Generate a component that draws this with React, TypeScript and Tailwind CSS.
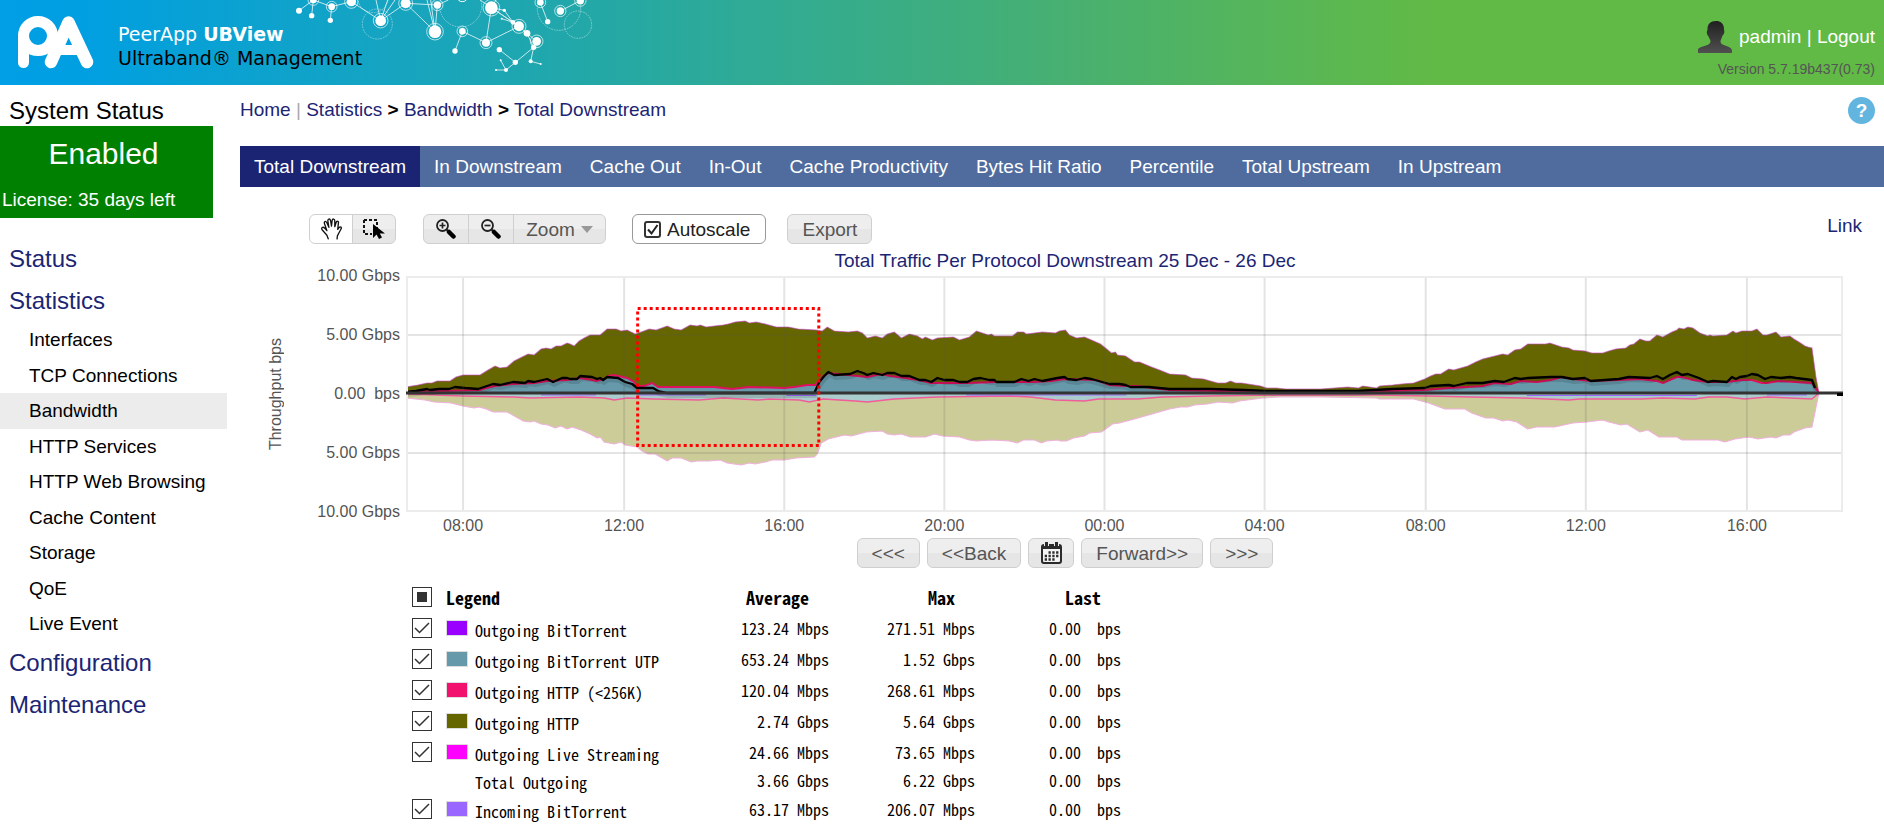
import React, { useState } from 'react';
import clsx from 'clsx';

// ---------------------------------------------------------------------------
// Data
// ---------------------------------------------------------------------------

const TABS = [
  'Total Downstream',
  'In Downstream',
  'Cache Out',
  'In-Out',
  'Cache Productivity',
  'Bytes Hit Ratio',
  'Percentile',
  'Total Upstream',
  'In Upstream',
];

const STATISTICS_ITEMS = [
  'Interfaces',
  'TCP Connections',
  'Bandwidth',
  'HTTP Services',
  'HTTP Web Browsing',
  'Cache Content',
  'Storage',
  'QoE',
  'Live Event',
];

interface LegendRow {
  name: string;
  color?: string;
  average: string;
  max: string;
  last: string;
}

const LEGEND_ROWS: LegendRow[] = [
  { name: 'Outgoing BitTorrent', color: '#9900ff', average: '123.24 Mbps', max: '271.51 Mbps', last: '0.00  bps' },
  { name: 'Outgoing BitTorrent UTP', color: '#6699aa', average: '653.24 Mbps', max: '1.52 Gbps', last: '0.00  bps' },
  { name: 'Outgoing HTTP (<256K)', color: '#f2116c', average: '120.04 Mbps', max: '268.61 Mbps', last: '0.00  bps' },
  { name: 'Outgoing HTTP', color: '#666600', average: '2.74 Gbps', max: '5.64 Gbps', last: '0.00  bps' },
  { name: 'Outgoing Live Streaming', color: '#ff00ff', average: '24.66 Mbps', max: '73.65 Mbps', last: '0.00  bps' },
  { name: 'Total Outgoing', average: '3.66 Gbps', max: '6.22 Gbps', last: '0.00  bps' },
  { name: 'Incoming BitTorrent', color: '#9966ff', average: '63.17 Mbps', max: '206.07 Mbps', last: '0.00  bps' },
];

// ---------------------------------------------------------------------------
// Chart series, in plot units (1436 x 236, zero line at 117)
// ---------------------------------------------------------------------------

const PLOT_WIDTH = 1436;
const PLOT_HEIGHT = 236;
const ZERO_Y = 117;

const Y_TICKS = ['10.00 Gbps', '5.00 Gbps', '0.00  bps', '5.00 Gbps', '10.00 Gbps'];

const X_TICKS = [
  { x: 57, label: '08:00' },
  { x: 218, label: '12:00' },
  { x: 378, label: '16:00' },
  { x: 538, label: '20:00' },
  { x: 698, label: '00:00' },
  { x: 858, label: '04:00' },
  { x: 1019, label: '08:00' },
  { x: 1179, label: '12:00' },
  { x: 1340, label: '16:00' },
];

const OUTGOING =
  '0,111 12,109 21,107 26,107 31,105 44,105 50,101 57,99 74,99 82,94 89,90 94,92 101,91 108,85 114,82 122,78 128,79 135,73 140,72 145,73 150,70 155,70 161,67 164,68 168,70 173,65 178,62 184,59 194,59 201,53 210,53 215,55 221,54 229,58 235,56 243,53 250,54 261,50 268,53 275,54 284,49 291,50 294,49 300,51 308,50 317,49 322,48 329,46 339,45 343,47 350,46 359,48 370,51 377,51 382,51 392,53 410,54 416,55 421,51 428,55 442,56 451,55 456,57 461,62 469,60 476,62 481,58 488,56 495,62 503,58 511,60 516,63 519,61 526,64 531,62 547,61 553,64 563,61 570,55 582,59 585,58 588,60 606,60 611,56 617,56 620,58 636,56 649,57 653,55 659,54 663,59 670,62 678,61 685,64 694,68 699,72 705,77 709,76 711,79 719,80 728,86 733,86 745,91 753,94 763,98 779,99 785,102 797,103 811,107 819,107 824,105 829,107 835,107 854,110 860,112 870,112 879,113 914,113 941,111 952,112 956,110 970,112 973,110 986,109 995,108 1007,107 1018,103 1024,100 1029,98 1034,98 1042,93 1047,94 1061,90 1069,86 1076,83 1096,78 1101,79 1108,74 1114,73 1121,68 1139,68 1143,67 1155,71 1162,72 1166,74 1178,75 1185,77 1196,77 1202,75 1209,73 1219,72 1223,69 1227,68 1233,63 1239,65 1243,65 1250,59 1256,61 1265,56 1270,54 1272,52 1277,53 1281,51 1286,52 1293,57 1301,60 1303,59 1306,60 1320,59 1326,55 1329,57 1335,55 1345,55 1350,53 1356,59 1360,59 1369,56 1374,61 1383,60 1387,63 1392,66 1398,70 1401,71 1405,72 1409,101 1412,117';

const INCOMING =
  '0,122 19,124 28,126 45,127 57,130 68,132 73,131 80,133 87,136 101,136 117,145 124,146 128,145 135,148 142,149 149,152 155,150 161,153 166,151 175,154 184,158 191,162 194,161 198,166 208,168 215,166 219,169 231,171 236,175 242,178 249,178 261,185 266,182 275,182 285,186 291,185 303,185 314,184 321,187 335,189 343,187 349,188 359,186 366,184 378,184 390,182 408,181 411,178 415,167 422,163 438,159 445,160 460,156 476,155 481,158 488,159 495,158 504,161 519,161 528,158 536,160 553,161 563,164 570,165 585,164 603,165 611,167 617,164 628,164 635,167 640,165 651,164 654,165 660,165 667,162 678,160 683,157 695,156 706,148 713,147 728,143 742,139 763,133 774,131 781,131 788,129 801,128 811,126 826,127 833,125 856,122 874,121 914,121 970,122 973,123 1007,123 1022,127 1038,133 1058,133 1065,137 1079,142 1087,142 1096,145 1101,144 1110,146 1121,153 1130,151 1148,151 1166,147 1180,146 1196,144 1202,146 1214,149 1220,148 1233,156 1241,154 1252,161 1270,161 1275,164 1292,164 1311,164 1318,166 1328,163 1342,161 1351,163 1364,161 1369,162 1376,159 1383,159 1387,156 1398,152 1405,151 1412,117';

const CACHE_LINE =
  '0,116 10,115 21,113 24,114 33,113 43,113 49,111 59,112 72,113 87,108 94,109 107,106 119,107 122,105 128,106 141,103 147,106 156,102 161,102 164,103 171,103 174,100 186,101 191,103 194,102 197,104 201,101 212,102 219,106 226,108 231,112 247,112 252,115 261,117 408,117 413,106 418,100 422,96 428,99 444,98 451,95 457,97 461,99 467,97 476,99 481,97 488,97 495,100 503,100 513,104 519,104 525,106 531,102 538,104 547,104 553,106 561,106 567,103 574,102 583,104 588,104 590,106 608,106 615,103 622,105 628,103 636,105 651,102 658,101 661,103 670,104 678,102 685,103 703,108 713,108 719,109 724,111 742,111 763,113 803,113 838,114 860,115 950,115 986,113 1018,112 1024,110 1042,109 1047,110 1060,107 1076,107 1088,105 1097,106 1108,102 1114,103 1121,102 1144,101 1155,101 1166,103 1178,102 1184,105 1212,103 1222,101 1243,102 1250,100 1256,103 1263,99 1270,96 1275,99 1281,98 1292,102 1301,106 1306,105 1320,106 1325,101 1329,103 1333,101 1340,100 1345,98 1351,99 1358,103 1364,101 1374,102 1383,101 1389,102 1405,104 1408,112';

const UTP_OUT =
  '0,116 74,114 80,112 89,110 107,108 128,107 141,105 161,104 174,102 186,104 190,105 198,103 202,100 208,99 221,102 228,106 231,110 238,110 246,107 252,111 308,111 326,113 343,111 378,112 388,111 401,109 409,109 416,101 422,97 442,99 461,101 475,98 484,100 492,101 512,104 525,107 561,107 590,106 628,106 645,105 658,103 690,104 703,109 719,110 731,110 745,112 763,114 860,116 950,116 1018,114 1042,112 1060,111 1076,110 1088,107 1104,108 1114,105 1130,106 1144,104 1155,101 1166,103 1184,105 1212,104 1233,103 1250,105 1256,107 1270,101 1275,101 1286,104 1301,106 1320,106 1335,104 1345,104 1355,107 1360,107 1372,105 1405,107 1412,117';

const UTP_IN =
  '0,118 57,120 107,121 124,122 173,121 198,122 208,124 221,122 247,123 293,124 317,122 352,124 363,123 393,124 403,126 417,123 449,125 461,126 488,123 531,121 603,120 624,121 649,124 678,125 692,123 731,123 756,121 803,120 874,119 970,119 1022,120 1065,121 1115,122 1162,124 1173,123 1234,123 1256,122 1288,123 1302,121 1320,121 1338,123 1360,121 1405,123 1412,117';

const area = (points: string) => `0,${ZERO_Y} ${points} 1412,${ZERO_Y}`;

// ---------------------------------------------------------------------------
// Icons and drawings
// ---------------------------------------------------------------------------

function Logo() {
  return (
    <svg viewBox="0 0 78 54" className="h-[54px] w-[78px]" fill="none" stroke="#fff" strokeLinecap="round" strokeLinejoin="round" aria-hidden="true">
      <circle cx="21" cy="21" r="14.5" strokeWidth="11" />
      <path d="M6.5 21V47.5" strokeWidth="11" />
      <path d="M34 47 51.5 7.5 70 47" strokeWidth="12.5" />
      <path d="M40 35H63" strokeWidth="10" />
    </svg>
  );
}

const NODES: [number, number, number, boolean][] = [
  [57, 32, 9, false], [95, 47, 8, false], [100, 0, 10, true], [155, 20, 10, true], [151, 61, 8, false],
  [214, 5, 14, true], [302, 62, 16, true], [377, 10, 15, true], [472, 15, 11, true], [465, 95, 19, true],
  [547, 94, 10, true], [525, 153, 8, false], [618, 128, 12, true], [634, 23, 19, true], [673, 31, 5, false],
  [665, 56, 3, false], [699, 67, 7, false], [717, 79, 15, true], [741, 100, 10, false], [770, 124, 13, true],
  [761, 142, 8, false], [752, 184, 6, false], [782, 192, 3, false], [706, 187, 8, false], [658, 149, 8, false],
  [662, 181, 3, false], [678, 210, 6, false], [648, 210, 3, false], [781, 7, 10, true], [803, 65, 8, false],
  [841, 33, 11, true], [901, 2, 11, true],
];

// Molecule decoration, bleeding off the top edge of the banner
function Network() {
  return (
    <svg viewBox="0 0 990 255" className="h-[85px] w-[330px]" fill="none" stroke="#fff" aria-hidden="true">
      <g strokeWidth="3" opacity=".75">
        <path d="M57 32 100 0 95 47M100 0 155 20 151 61M155 20 214 5 302 62 377 10 465 95M302 62 288 0M302 62 323 0M302 62 345 0M377 10 472 15 465 95M465 95 441 0M465 95 452 0M377 10 365 0M472 15 505 0" />
        <path d="M525 153 547 94 618 128 634 23 600 0M618 128 717 79 634 23M634 23 699 67M634 23 673 31M665 56 699 67 673 31M717 79 741 100 770 124 761 142 752 184 782 192M741 100 761 142 706 187 658 149M706 187 678 210 648 210M678 210 662 181M781 7 803 65M841 33 901 2M634 23 648 0" />
      </g>
      <g strokeWidth="3" opacity=".45" strokeDasharray="5 3">
        <circle cx="292" cy="72" r="45" />
        <circle cx="542" cy="18" r="63" />
        <circle cx="837" cy="26" r="65" />
        <circle cx="894" cy="74" r="41" />
        <circle cx="279" cy="-8" r="46" />
      </g>
      <circle cx="547" cy="-12" r="17" strokeWidth="3" />
      {NODES.map(([cx, cy, r, ring]) => (
        <g key={`${cx}-${cy}`}>
          <circle cx={cx} cy={cy} r={r} fill="#fff" stroke="none" />
          {ring && <circle cx={cx} cy={cy} r={r + 6} strokeWidth="3" opacity=".65" />}
        </g>
      ))}
    </svg>
  );
}

function UserIcon() {
  return (
    <svg viewBox="0 0 34 32" className="h-8 w-[34px]" aria-hidden="true">
      <defs>
        <linearGradient id="user-fill" x1="0" y1="0" x2="0" y2="1">
          <stop offset="0" stopColor="#202020" />
          <stop offset="1" stopColor="#505050" />
        </linearGradient>
      </defs>
      <path
        fill="url(#user-fill)"
        d="M18 0C22.5 0 26 2.5 26 8C26 9 26.5 10 26.3 11.5C26 13.5 24.5 14 24 16C23.5 18 22.5 19 22.5 20.5C22.5 22.5 24 23.5 27 24.5C31 26 34 27 34 30V32H0V28C1 26.5 5 25.5 8 24.5C11 23.5 12.5 22 12.5 20C12.5 18.5 11 17.5 10.5 15.5C9.5 14 9 13.5 8.8 11.5C8.7 10 9.5 9.5 9.5 8C9.5 3 12.5 0 18 0Z"
      />
    </svg>
  );
}

function HandIcon() {
  return (
    <svg viewBox="0 0 64 66" className="h-[22px] w-[21px]" fill="none" stroke="#111" strokeWidth="4" strokeLinecap="round" strokeLinejoin="round" aria-hidden="true">
      <path d="M22 63 18 52 4 36C-1 29 6 25 11 30L18 38 11 18C8 10 14 7 18 14L24 28 21 9C20 2 27 0 29 7L32 24 34 7C35 1 42 1 42 8L42 26 46 13C48 7 55 9 53 15L51 34 55 29C59 24 64 28 61 33L54 46 50 54 49 63" />
    </svg>
  );
}

function SelectIcon() {
  return (
    <svg viewBox="0 0 22 20" className="h-5 w-[22px]" aria-hidden="true">
      <path d="M1 1H14V9M1 1V15H9" fill="none" stroke="#111" strokeWidth="2" strokeDasharray="3 2" />
      <path d="M10 5V19L13.5 15.5 16 20 19 18.5 16.8 14.5H22Z" fill="#000" />
    </svg>
  );
}

function MagnifierIcon({ plus }: { plus?: boolean }) {
  return (
    <svg viewBox="0 0 20 20" className="h-5 w-5" fill="none" stroke="#222" aria-hidden="true">
      <circle cx="6.5" cy="6.5" r="5.5" strokeWidth="1.8" />
      <path d={plus ? 'M3.5 6.5H9.5M6.5 3.5V9.5' : 'M3.5 6.5H9.5'} strokeWidth="1.7" />
      <path d="M10.5 10.5 12.5 12.5" strokeWidth="2" />
      <path d="M13 13 17.5 17.5" stroke="#000" strokeWidth="4.5" strokeLinecap="round" />
    </svg>
  );
}

function CalendarIcon() {
  return (
    <svg viewBox="0 0 21 22" className="h-[22px] w-[21px]" aria-hidden="true">
      <rect x="1" y="3" width="19" height="18" rx="2" fill="#f4f4f4" stroke="#2b2b2b" strokeWidth="2" />
      <path d="M1 3H20V7H1Z" fill="#2b2b2b" />
      <path d="M5.5 0V4M15.5 0V4" stroke="#eee" strokeWidth="5" />
      <path d="M5.5 0V4.5M15.5 0V4.5" stroke="#2b2b2b" strokeWidth="3" />
      <path
        d="M7.5 10.5H17.5M3.7 14H17.5M3.7 17.5H14"
        stroke="#2b2b2b"
        strokeWidth="2.3"
        strokeDasharray="2.3 1.5"
      />
    </svg>
  );
}

// ---------------------------------------------------------------------------
// Small controls
// ---------------------------------------------------------------------------

const BUTTON = 'flex h-[30px] items-center justify-center border border-[#cfcfcf] bg-linear-to-b from-[#eeeeee] from-50% to-[#e6e6e6] to-50% text-[19px] leading-none text-[#555]';

function Button({ children, className, label }: { children: React.ReactNode; className?: string; label?: string }) {
  return (
    <button type="button" aria-label={label} className={clsx(BUTTON, className)}>
      {children}
    </button>
  );
}

function LegendCheckbox({ label, mixed }: { label: string; mixed?: boolean }) {
  const [checked, setChecked] = useState(true);
  return (
    <span className="relative block size-5">
      <input
        type="checkbox"
        aria-label={label}
        checked={checked}
        onChange={() => setChecked(!checked)}
        className="peer block size-5 appearance-none border border-[#333] bg-white"
      />
      <svg viewBox="0 0 20 20" className="pointer-events-none absolute inset-0 hidden size-5 peer-checked:block" aria-hidden="true">
        {mixed ? (
          <rect x="5" y="5" width="10" height="10" fill="#333" />
        ) : (
          <path d="M3 10 7.5 14.5 17 5" fill="none" stroke="#333" strokeWidth="1.5" />
        )}
      </svg>
    </span>
  );
}

// ---------------------------------------------------------------------------
// Page sections
// ---------------------------------------------------------------------------

function Header() {
  return (
    <header className="relative flex h-[85px] justify-between bg-[linear-gradient(90deg,#009fe6_0%,#009fe2_4%,#16a4c0_21%,#24a8a6_32%,#48b070_57%,#61ba46_76%)]">
      <div className="absolute top-0 left-[280px]">
        <Network />
      </div>
      <div className="relative flex gap-[23px] pt-[15px] pl-[17px]">
        <Logo />
        <div className="pt-[7px] font-['DejaVu_Sans',sans-serif] text-[19px] leading-6">
          <p className="text-white">
            PeerApp <b>UBView</b>
          </p>
          <p className="text-black">Ultraband® Management</p>
        </div>
      </div>
      <div className="relative flex flex-col items-end pt-[21px] pr-[9px]">
        <div className="flex items-center gap-[7px] text-[19px] text-white">
          <UserIcon />
          <p>
            <a href="#account">padmin</a> | <a href="#logout">Logout</a>
          </p>
        </div>
        <p className="mt-1.5 text-[14px] leading-5 text-[#555]">Version 5.7.19b437(0.73)</p>
      </div>
    </header>
  );
}

function Sidebar() {
  return (
    <aside className="w-[227px] shrink-0">
      <h2 className="pt-2.5 pl-[9px] text-2xl leading-[31px]">System Status</h2>
      <div className="h-[92px] w-[213px] bg-[#008000] text-white">
        <p className="pt-1 pr-1.5 text-center text-[30px] leading-[48px]">Enabled</p>
        <p className="pt-2 pl-0.5 text-[19px] leading-7">License: 35 days left</p>
      </div>
      <nav className="mt-5 text-2xl leading-[42px] text-[#1c2574]">
        <a href="#status" className="block pl-[9px]">Status</a>
        <a href="#statistics" className="block pl-[9px]">Statistics</a>
        <ul className="grid h-[320px] grid-rows-9 text-[19px] leading-[35px] text-black">
          {STATISTICS_ITEMS.map((item) => (
            <li key={item} className={clsx('pl-[29px]', item === 'Bandwidth' && 'bg-[#ececec]')}>
              <a href={`#${item}`} className="block">{item}</a>
            </li>
          ))}
        </ul>
        <a href="#configuration" className="block pl-[9px]">Configuration</a>
        <a href="#maintenance" className="block pl-[9px]">Maintenance</a>
      </nav>
    </aside>
  );
}

function Toolbar() {
  return (
    <div className="mt-[27px] flex items-start pr-[22px] pl-[69px]">
      <div className="flex">
        <Button label="Pan" className="w-11 rounded-l-md border-[#999] from-white to-white">
          <HandIcon />
        </Button>
        <Button label="Select" className="-ml-px w-11 rounded-r-md">
          <SelectIcon />
        </Button>
      </div>
      <div className="ml-[27px] flex">
        <Button label="Zoom in" className="w-[46px] rounded-l-md">
          <MagnifierIcon plus />
        </Button>
        <Button label="Zoom out" className="-ml-px w-[46px]">
          <MagnifierIcon />
        </Button>
        <Button className="-ml-px w-[93px] gap-1.5 rounded-r-md">
          Zoom
          <svg viewBox="0 0 12 7" className="h-[7px] w-3" aria-hidden="true">
            <path d="M0 0H12L6 7Z" fill="#999" />
          </svg>
        </Button>
      </div>
      <label className="ml-[26px] flex h-[30px] items-center gap-1.5 rounded-md border border-[#999] bg-white pr-[15px] pl-[11px] text-[19px] leading-none text-[#212121]">
        <span className="relative block size-[17px]">
          <input type="checkbox" defaultChecked className="peer block size-[17px] appearance-none rounded-[3px] border-2 border-[#333] bg-white" />
          <svg viewBox="0 0 17 17" className="pointer-events-none absolute inset-0 hidden size-[17px] peer-checked:block" aria-hidden="true">
            <path d="M4 8.5 7.5 12.5 13.5 4" fill="none" stroke="#222" strokeWidth="2" />
          </svg>
        </span>
        Autoscale
      </label>
      <Button className="ml-[21px] rounded-md px-3.5">Export</Button>
      <a href="#link" className="ml-auto text-[19px] leading-[23px] text-[#1c2574]">Link</a>
    </div>
  );
}

function TrafficChart() {
  return (
    <div className="mt-[3px] flex pr-[41px] pl-[18px]">
      <div className="flex h-[236px] w-6 items-center justify-center">
        <span className="rotate-180 text-base leading-6 text-[#545454] [writing-mode:vertical-rl]">Throughput bps</span>
      </div>
      <div className="-my-3 flex h-[260px] w-[118px] flex-col justify-between pr-1.5 text-right text-base leading-6 whitespace-pre text-[#545454]">
        {Y_TICKS.map((tick, index) => (
          <span key={index}>{tick}</span>
        ))}
      </div>
      <div className="min-w-0 flex-1">
        <svg viewBox={`0 0 ${PLOT_WIDTH} ${PLOT_HEIGHT}`} preserveAspectRatio="none" className="block h-[236px] w-full" role="img" aria-label="Throughput per protocol">
          <polygon points={area(OUTGOING)} fill="#666600" />
          <polyline points={OUTGOING} fill="none" stroke="#cc44cc" strokeOpacity=".6" />
          <polygon points={area(INCOMING)} fill="#cccc99" />
          <polyline points={INCOMING} fill="none" stroke="#f0b0dd" />

          {/* BitTorrent UTP with the thin small-object HTTP band around it */}
          <polygon points={area(UTP_OUT)} fill="#6699aa" />
          <polyline points={UTP_OUT} fill="none" stroke="#e0115f" strokeWidth="2" />
          <polygon points={area(UTP_IN)} fill="#aacccc" />
          <polyline points={UTP_IN} fill="none" stroke="#f25c9a" strokeWidth="1.5" />
          <path d="M135 119H190M231 119H300M380 119.500H410M560 119H720M1120 119.500H1290M1360 119H1400" stroke="#9966ff" />

          {/* Served from cache */}
          <g fill="none" stroke="#000" strokeLinejoin="round">
            <polyline points={CACHE_LINE} strokeOpacity=".12" strokeWidth="4" transform="translate(1 3)" />
            <polyline points={CACHE_LINE} strokeWidth="2.3" />
          </g>

          <g stroke="#545454" strokeOpacity=".16" strokeWidth="2">
            {X_TICKS.map(({ x }) => (
              <path key={x} d={`M${x} 1V235`} />
            ))}
            <path d={`M0 59H${PLOT_WIDTH}M0 177H${PLOT_WIDTH}`} />
          </g>
          <rect x="1" y="1" width={PLOT_WIDTH - 2} height={PLOT_HEIGHT - 2} fill="none" stroke="#ececec" strokeWidth="2" />
          <path d={`M0 ${ZERO_Y}H${PLOT_WIDTH}`} stroke="#333" strokeWidth="3" />
          <path d="M1430 118.5H1436" stroke="#000" strokeWidth="3" />
          <rect x="231.5" y="32.5" width="181" height="137" fill="none" stroke="#f00" strokeWidth="3" strokeDasharray="3 3" />
        </svg>
        <div className="relative mt-0.5 h-6 text-base leading-6 text-[#545454]">
          {X_TICKS.map(({ x, label }) => (
            <span key={x} className="absolute -translate-x-1/2" style={{ left: `${(x / PLOT_WIDTH) * 100}%` }}>
              {label}
            </span>
          ))}
        </div>
      </div>
    </div>
  );
}

function Legend() {
  return (
    <table className="mt-[13px] ml-[166px] table-fixed border-collapse font-['Noto_Sans_Mono_CJK_JP','Liberation_Mono',monospace] text-[16px] leading-5 whitespace-pre text-black">
      <colgroup>
        <col className="w-[34px]" />
        <col className="w-[29px]" />
        <col className="w-[208px]" />
        <col className="w-[146px]" />
        <col className="w-[146px]" />
        <col className="w-[146px]" />
      </colgroup>
      <thead className="text-[18px]">
        <tr className="h-[31px]">
          <th className="p-0">
            <LegendCheckbox label="All series" mixed />
          </th>
          <th colSpan={2} className="p-0 text-left">Legend</th>
          <th className="p-0 pr-5 text-right">Average</th>
          <th className="p-0 pr-5 text-right">Max</th>
          <th className="p-0 pr-5 text-right">Last</th>
        </tr>
      </thead>
      <tbody>
        {LEGEND_ROWS.map((row) => (
          <tr key={row.name} className={row.color ? 'h-[31px]' : 'h-[26px]'}>
            <td className="p-0">{row.color && <LegendCheckbox label={row.name} />}</td>
            <td className="p-0">
              {row.color && (
                <span className="block h-4 w-[22px] border border-[#ddd]" style={{ backgroundColor: row.color }} />
              )}
            </td>
            <td className="p-0 pt-1">{row.name}</td>
            <td className="p-0 text-right">{row.average}</td>
            <td className="p-0 text-right">{row.max}</td>
            <td className="p-0 text-right">{row.last}</td>
          </tr>
        ))}
      </tbody>
    </table>
  );
}

export default function App() {
  return (
    <div className="h-screen overflow-hidden bg-white font-['Liberation_Sans',Arial,sans-serif] text-black">
      <Header />
      <div className="flex">
        <Sidebar />
        <main className="ml-[13px] min-w-0 flex-1">
          <div className="mb-[11px] flex h-[50px] items-center justify-between pr-[9px] text-[19px]">
            <nav aria-label="Breadcrumb" className="text-[#1c2574]">
              <a href="#home">Home</a> <span className="text-[#aaa]">|</span> <a href="#statistics">Statistics</a>{' '}
              <span className="font-bold text-black">&gt;</span> <a href="#bandwidth">Bandwidth</a>{' '}
              <span className="font-bold text-black">&gt;</span> <a href="#total">Total Downstream</a>
            </nav>
            <button type="button" aria-label="Help" className="size-[27px] rounded-full bg-[#62b5de] text-[19px] leading-[27px] font-bold text-white">
              ?
            </button>
          </div>
          <nav aria-label="Bandwidth views" className="flex h-[41px] bg-[#506c9e] text-[19px] leading-[41px] text-white">
            {TABS.map((tab, index) => (
              <a key={tab} href={`#${tab}`} className={clsx('px-3.5', index === 0 && 'bg-[#1b2473]')}>
                {tab}
              </a>
            ))}
          </nav>
          <Toolbar />
          <section className="pl-1.5">
            <h1 className="mt-[5px] text-center text-[19px] leading-6 text-[#1c2574]">
              Total Traffic Per Protocol Downstream 25 Dec - 26 Dec
            </h1>
            <TrafficChart />
            <div className="flex justify-center gap-[7px]">
              <Button className="rounded-md px-3.5">&lt;&lt;&lt;</Button>
              <Button className="rounded-md px-3.5">&lt;&lt;Back</Button>
              <Button label="Pick date" className="w-[46px] rounded-md">
                <CalendarIcon />
              </Button>
              <Button className="rounded-md px-3.5">Forward&gt;&gt;</Button>
              <Button className="rounded-md px-3.5">&gt;&gt;&gt;</Button>
            </div>
            <Legend />
          </section>
        </main>
      </div>
    </div>
  );
}
